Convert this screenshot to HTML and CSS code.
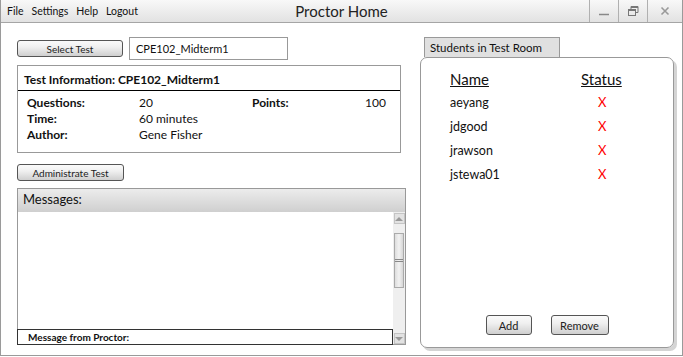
FILE: index.html
```html
<!DOCTYPE html>
<html lang="en">
<head>
  <meta charset="UTF-8">
  <title>Proctor Home</title>
  <link rel="stylesheet" href="styles.css">
</head>
<body>
<div class="window">
  <!-- title bar -->
  <div class="title-bar">
    <div class="menu">
      <span>File</span>
      <span>Settings</span>
      <span>Help</span>
      <span>Logout</span>
    </div>
    <div class="title">Proctor Home</div>
    <div class="controls">
      <div class="ctl"><svg width="12" height="12" viewBox="0 0 12 12"><path d="M1 9.5h10" stroke="#888" stroke-width="1.5"/></svg></div>
      <div class="ctl"><svg width="12" height="12" viewBox="0 0 12 12"><rect x="1.5" y="4.5" width="7" height="6" fill="none" stroke="#777" stroke-width="1"/><path d="M1.5 5.5h7" stroke="#777"/><path d="M4 4.5V1.5h7v6H8.5M4 2.5h7" fill="none" stroke="#777"/></svg></div>
      <div class="ctl ctl-close"><svg width="12" height="12" viewBox="0 0 12 12"><path d="M2.5 2.5l7 7M9.5 2.5l-7 7" stroke="#999" stroke-width="1.6"/></svg></div>
    </div>
  </div>

  <div class="content">
    <!-- left column -->
    <div class="left">
      <div class="select-row">
        <button class="btn btn-select">Select Test</button>
        <div class="text-field">CPE102_Midterm1</div>
      </div>

      <div class="info-box">
        <div class="info-head">Test Information: CPE102_Midterm1</div>
        <div class="info-grid">
          <span class="lbl">Questions:</span><span>20</span><span class="lbl">Points:</span><span class="num">100</span>
          <span class="lbl">Time:</span><span>60 minutes</span><span></span><span></span>
          <span class="lbl">Author:</span><span>Gene Fisher</span><span></span><span></span>
        </div>
      </div>

      <button class="btn btn-admin">Administrate Test</button>

      <div class="messages">
        <div class="messages-head">Messages:</div>
        <div class="messages-body">
          <div class="messages-main">
            <div class="messages-area"></div>
            <div class="proctor-bar">Message from Proctor:</div>
          </div>
          <div class="scrollbar">
            <div class="arrow"><svg width="8" height="6" viewBox="0 0 8 6"><path d="M0 5L4 1L8 5z" fill="#999"/></svg></div>
            <div class="thumb"><div class="grip"></div></div>
            <div class="arrow arrow-down"><svg width="8" height="6" viewBox="0 0 8 6"><path d="M0 1L4 5L8 1z" fill="#999"/></svg></div>
          </div>
        </div>
      </div>
    </div>

    <!-- right column -->
    <div class="right">
      <div class="tab">Students in Test Room</div>
      <div class="panel">
        <div class="students">
          <span class="col-head">Name</span><span class="col-head">Status</span>
          <span>aeyang</span><span class="status">X</span>
          <span>jdgood</span><span class="status">X</span>
          <span>jrawson</span><span class="status">X</span>
          <span>jstewa01</span><span class="status">X</span>
        </div>
        <div class="panel-buttons">
          <button class="btn btn-add">Add</button>
          <button class="btn btn-remove">Remove</button>
        </div>
      </div>
    </div>
  </div>
</div>
</body>
</html>
```

FILE: styles.css
```css
body {
  margin: 0;
  background-color: #fff;
  font-family: Lato, "Open Sans", sans-serif;
  color: #111;
}

.window {
  width: 683px;
  height: 356px;
  box-sizing: border-box;
  border: 1px solid #9a9a9a;
  border-top: none;
  background-color: #fff;
}

/* title bar */
.title-bar {
  height: 23px;
  display: flex;
  align-items: center;
  background: linear-gradient(#f8f8f8, #e2e2e2);
  border-bottom: 1px solid #a5a5a5;
  box-sizing: border-box;
  position: relative;
}

.menu {
  display: flex;
  gap: 8px;
  padding-left: 6px;
  font-size: 10.5px;
}

.title {
  position: absolute;
  left: 0;
  right: 0;
  text-align: center;
  font-size: 15px;
  color: #222;
  pointer-events: none;
}

.controls {
  margin-left: auto;
  display: flex;
  align-self: stretch;
}

.ctl {
  width: 28px;
  display: flex;
  align-items: center;
  justify-content: center;
  border-left: 1px solid #b0b0b0;
}

.ctl-close {
  width: 34px;
}

/* main area */
.content {
  display: flex;
  padding: 14px 0 0 16px;
}

.left {
  width: 389px;
}

.select-row {
  display: flex;
  align-items: center;
  gap: 6px;
  height: 23px;
}

.btn {
  font-family: inherit;
  font-size: 10px;
  color: #222;
  height: 17px;
  padding: 0;
  border: 1px solid #555;
  border-radius: 3px;
  background: linear-gradient(#fafafa 0%, #f0f0f0 40%, #cfcfcf 100%);
}

.btn-select {
  width: 106px;
}

.text-field {
  width: 159px;
  height: 23px;
  box-sizing: border-box;
  border: 1px solid #999;
  font-size: 11px;
  line-height: 21px;
  padding-left: 6px;
}

.info-box {
  margin-top: 5px;
  width: 384px;
  height: 88px;
  box-sizing: border-box;
  border: 1px solid #999;
  font-size: 12px;
}

.info-head {
  font-weight: bold;
  padding: 6px 6px 0 6px;
  height: 25px;
  box-sizing: border-box;
  border-bottom: 1px solid #000;
}

.info-grid {
  display: grid;
  grid-template-columns: 112px 113px 100px 34px;
  padding: 4px 0 0 9px;
  line-height: 16px;
}

.lbl {
  font-weight: bold;
}

.num {
  text-align: right;
}

.btn-admin {
  display: block;
  margin-top: 11px;
  width: 107px;
}

/* messages */
.messages {
  margin-top: 7px;
  height: 157px;
  border: 1px solid #999;
  box-sizing: border-box;
  display: flex;
  flex-direction: column;
}

.messages-head {
  height: 23px;
  background: linear-gradient(#ececec, #cfcfcf);
  font-size: 13px;
  padding-left: 5px;
  line-height: 20px;
}

.messages-body {
  flex: 1;
  display: flex;
}

.messages-main {
  flex: 1;
  display: flex;
  flex-direction: column;
}

.messages-area {
  flex: 1;
}

.proctor-bar {
  height: 16px;
  box-sizing: border-box;
  border: 1px solid #333;
  margin-left: -1px;
  margin-bottom: -1px;
  font-size: 10px;
  font-weight: bold;
  padding-left: 10px;
  line-height: 15px;
}

.scrollbar {
  width: 12px;
  background-color: #efefef;
  display: flex;
  flex-direction: column;
  align-items: center;
  padding-top: 1px;
}

.arrow {
  width: 11px;
  height: 11px;
  box-sizing: border-box;
  border: 1px solid #c4c4c4;
  background-color: #e2e2e2;
  display: flex;
  align-items: center;
  justify-content: center;
}

.arrow-down {
  margin-top: auto;
}

.thumb {
  margin-top: 9px;
  width: 10px;
  height: 55px;
  box-sizing: border-box;
  border: 1px solid #aaa;
  background: linear-gradient(90deg, #ddd, #f2f2f2, #d6d6d6);
  display: flex;
  align-items: center;
}

.grip {
  width: 100%;
  height: 3px;
  border-top: 1px solid #888;
  border-bottom: 1px solid #888;
  box-sizing: border-box;
}

/* students panel */
.right {
  margin-left: 14px;
  width: 258px;
}

.tab {
  margin-left: 4px;
  width: 136px;
  height: 20px;
  box-sizing: border-box;
  border: 1px solid #999;
  border-bottom: none;
  background-color: #e0e0e0;
  font-size: 11.5px;
  padding-left: 5px;
  line-height: 19px;
}

.panel {
  width: 254px;
  height: 291px;
  box-sizing: border-box;
  border: 1px solid #999;
  border-radius: 7px;
  box-shadow: 3px 3px 0 #d4d4d4;
  display: flex;
  flex-direction: column;
}

.students {
  display: grid;
  grid-template-columns: 131px 60px;
  padding: 13px 0 0 29px;
  row-gap: 7px;
  font-size: 12.5px;
  line-height: 17px;
}

.col-head {
  font-size: 15px;
  text-decoration: underline;
  margin-bottom: -1px;
}

.status {
  color: #f00;
  padding-left: 17px;
  font-size: 13px;
}

.panel-buttons {
  margin-top: auto;
  margin-bottom: 12px;
  display: flex;
  justify-content: center;
  gap: 19px;
}

.btn-add,
.btn-remove {
  height: 20px;
  font-size: 11px;
}

.btn-add {
  width: 46px;
}

.btn-remove {
  width: 58px;
}
```
